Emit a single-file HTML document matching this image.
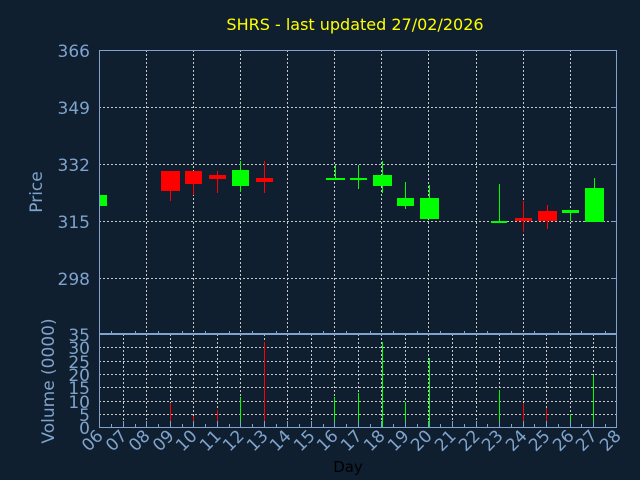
<!DOCTYPE html>
<html><head><style>
html,body{margin:0;padding:0;background:#0f1f2f;width:640px;height:480px;overflow:hidden}
svg{display:block}
text{font-family:"DejaVu Sans","Liberation Sans",sans-serif}
</style></head><body>
<svg width="640" height="480" viewBox="0 0 640 480" xmlns="http://www.w3.org/2000/svg">
<rect width="640" height="480" fill="#0f1f2f"/>
<text x="355" y="30" fill="#ffff00" font-size="16" text-anchor="middle">SHRS - last updated 27/02/2026</text>
<g stroke="#c8c8c8" stroke-dasharray="2,2" stroke-width="1">
<line x1="99" x2="617" y1="107.5" y2="107.5"/>
<line x1="99" x2="617" y1="164.5" y2="164.5"/>
<line x1="99" x2="617" y1="221.5" y2="221.5"/>
<line x1="99" x2="617" y1="278.5" y2="278.5"/>
<line x1="146.5" x2="146.5" y1="50" y2="334"/>
<line x1="193.5" x2="193.5" y1="50" y2="334"/>
<line x1="240.5" x2="240.5" y1="50" y2="334"/>
<line x1="287.5" x2="287.5" y1="50" y2="334"/>
<line x1="334.5" x2="334.5" y1="50" y2="334"/>
<line x1="381.5" x2="381.5" y1="50" y2="334"/>
<line x1="428.5" x2="428.5" y1="50" y2="334"/>
<line x1="476.5" x2="476.5" y1="50" y2="334"/>
<line x1="523.5" x2="523.5" y1="50" y2="334"/>
<line x1="570.5" x2="570.5" y1="50" y2="334"/>
<line x1="99" x2="617" y1="347.5" y2="347.5"/>
<line x1="99" x2="617" y1="361.5" y2="361.5"/>
<line x1="99" x2="617" y1="374.5" y2="374.5"/>
<line x1="99" x2="617" y1="387.5" y2="387.5"/>
<line x1="99" x2="617" y1="401.5" y2="401.5"/>
<line x1="99" x2="617" y1="414.5" y2="414.5"/>
<line x1="123.5" x2="123.5" y1="334" y2="427"/><line x1="146.5" x2="146.5" y1="334" y2="427"/>
<line x1="170.5" x2="170.5" y1="334" y2="427"/><line x1="193.5" x2="193.5" y1="334" y2="427"/>
<line x1="217.5" x2="217.5" y1="334" y2="427"/><line x1="240.5" x2="240.5" y1="334" y2="427"/>
<line x1="264.5" x2="264.5" y1="334" y2="427"/><line x1="287.5" x2="287.5" y1="334" y2="427"/>
<line x1="311.5" x2="311.5" y1="334" y2="427"/><line x1="334.5" x2="334.5" y1="334" y2="427"/>
<line x1="358.5" x2="358.5" y1="334" y2="427"/><line x1="381.5" x2="381.5" y1="334" y2="427"/>
<line x1="405.5" x2="405.5" y1="334" y2="427"/><line x1="428.5" x2="428.5" y1="334" y2="427"/>
<line x1="452.5" x2="452.5" y1="334" y2="427"/><line x1="476.5" x2="476.5" y1="334" y2="427"/>
<line x1="499.5" x2="499.5" y1="334" y2="427"/><line x1="523.5" x2="523.5" y1="334" y2="427"/>
<line x1="546.5" x2="546.5" y1="334" y2="427"/><line x1="570.5" x2="570.5" y1="334" y2="427"/>
<line x1="593.5" x2="593.5" y1="334" y2="427"/>
</g>
<g>
<rect x="99" y="195" width="8" height="11" fill="#00ff00"/>
<line x1="170.5" x2="170.5" y1="171" y2="201" stroke="#ff0000"/><rect x="161" y="171" width="19" height="20" fill="#ff0000"/>
<line x1="193.5" x2="193.5" y1="171" y2="195" stroke="#ff0000"/><rect x="185" y="171" width="17" height="13" fill="#ff0000"/>
<line x1="217.5" x2="217.5" y1="171" y2="193" stroke="#ff0000"/><rect x="209" y="175" width="17" height="4" fill="#ff0000"/>
<line x1="240.5" x2="240.5" y1="161" y2="192" stroke="#00ff00"/><rect x="232" y="170" width="17" height="16" fill="#00ff00"/>
<line x1="264.5" x2="264.5" y1="161" y2="193" stroke="#ff0000"/><rect x="256" y="178" width="17" height="4" fill="#ff0000"/>
<line x1="335.5" x2="335.5" y1="165" y2="180" stroke="#00ff00"/><rect x="326" y="178" width="19" height="2" fill="#00ff00"/>
<line x1="358.5" x2="358.5" y1="165" y2="189" stroke="#00ff00"/><rect x="350" y="178" width="17" height="2" fill="#00ff00"/>
<line x1="382.5" x2="382.5" y1="161" y2="193" stroke="#00ff00"/><rect x="373" y="175" width="19" height="11" fill="#00ff00"/>
<line x1="405.5" x2="405.5" y1="182" y2="209" stroke="#00ff00"/><rect x="397" y="198" width="17" height="8" fill="#00ff00"/>
<line x1="429.5" x2="429.5" y1="185" y2="219" stroke="#00ff00"/><rect x="420" y="198" width="19" height="21" fill="#00ff00"/>
<line x1="499.5" x2="499.5" y1="184" y2="222" stroke="#00ff00"/><rect x="491" y="221" width="16" height="2" fill="#00ff00"/>
<line x1="523.5" x2="523.5" y1="201" y2="232" stroke="#ff0000"/><rect x="515" y="218" width="17" height="3" fill="#ff0000"/>
<line x1="547.5" x2="547.5" y1="205" y2="229" stroke="#ff0000"/><rect x="538" y="211" width="19" height="10" fill="#ff0000"/>
<line x1="570.5" x2="570.5" y1="210" y2="221" stroke="#00ff00"/><rect x="562" y="210" width="17" height="3" fill="#00ff00"/>
<line x1="594.5" x2="594.5" y1="178" y2="221" stroke="#00ff00"/><rect x="585" y="188" width="19" height="34" fill="#00ff00"/>
</g>
<g stroke-width="1">
<line x1="170.5" x2="170.5" y1="403" y2="427" stroke="#ff0000"/>
<line x1="193.5" x2="193.5" y1="416" y2="427" stroke="#ff0000"/>
<line x1="217.5" x2="217.5" y1="410" y2="427" stroke="#ff0000"/>
<line x1="240.5" x2="240.5" y1="397" y2="427" stroke="#00ff00"/>
<line x1="264.5" x2="264.5" y1="342" y2="427" stroke="#ff0000"/>
<line x1="334.5" x2="334.5" y1="397" y2="427" stroke="#00ff00"/>
<line x1="358.5" x2="358.5" y1="393" y2="427" stroke="#00ff00"/>
<line x1="382.5" x2="382.5" y1="342" y2="427" stroke="#00ff00"/>
<line x1="405.5" x2="405.5" y1="402" y2="427" stroke="#00ff00"/>
<line x1="429.5" x2="429.5" y1="358" y2="427" stroke="#00ff00"/>
<line x1="499.5" x2="499.5" y1="390" y2="427" stroke="#00ff00"/>
<line x1="523.5" x2="523.5" y1="403" y2="427" stroke="#ff0000"/>
<line x1="546.5" x2="546.5" y1="408" y2="427" stroke="#ff0000"/>
<line x1="570.5" x2="570.5" y1="414" y2="427" stroke="#00ff00"/>
<line x1="593.5" x2="593.5" y1="375" y2="427" stroke="#00ff00"/>
</g>
<g stroke="#7fa3cc" fill="none" stroke-width="1">
<rect x="99.5" y="50.5" width="517" height="283"/>
<rect x="99.5" y="334.5" width="517" height="93"/>
<line x1="611" x2="617" y1="107.5" y2="107.5"/><line x1="611" x2="617" y1="164.5" y2="164.5"/>
<line x1="611" x2="617" y1="221.5" y2="221.5"/><line x1="611" x2="617" y1="278.5" y2="278.5"/>
<path d="M99.5 427v-6M123.5 427v-6M146.5 427v-6M170.5 427v-6M193.5 427v-6M217.5 427v-6M240.5 427v-6M264.5 427v-6M287.5 427v-6M311.5 427v-6M334.5 427v-6M358.5 427v-6M381.5 427v-6M405.5 427v-6M428.5 427v-6M452.5 427v-6M476.5 427v-6M499.5 427v-6M523.5 427v-6M546.5 427v-6M570.5 427v-6M593.5 427v-6"/>
<path d="M111.5 427v-3M135.5 427v-3M158.5 427v-3M182.5 427v-3M205.5 427v-3M229.5 427v-3M252.5 427v-3M276.5 427v-3M299.5 427v-3M323.5 427v-3M346.5 427v-3M370.5 427v-3M393.5 427v-3M417.5 427v-3M440.5 427v-3M464.5 427v-3M487.5 427v-3M511.5 427v-3M534.5 427v-3M558.5 427v-3M581.5 427v-3M605.5 427v-3"/>
<path d="M111.5 334v-3M135.5 334v-3M158.5 334v-3M182.5 334v-3M205.5 334v-3M229.5 334v-3M252.5 334v-3M276.5 334v-3M299.5 334v-3M323.5 334v-3M346.5 334v-3M370.5 334v-3M393.5 334v-3M417.5 334v-3M440.5 334v-3M464.5 334v-3M487.5 334v-3M511.5 334v-3M534.5 334v-3M558.5 334v-3M581.5 334v-3M605.5 334v-3"/>
</g>
<g fill="#7fa3cc" font-size="17" text-anchor="end">
<text x="90" y="57">366</text><text x="90" y="114">349</text><text x="90" y="171">332</text>
<text x="90" y="228">315</text><text x="90" y="285">298</text>
<text x="90" y="341">35</text><text x="90" y="354">30</text><text x="90" y="368">25</text>
<text x="90" y="381">20</text><text x="90" y="394">15</text><text x="90" y="408">10</text>
<text x="90" y="421">5</text><text x="90" y="434">0</text>
</g>
<text transform="translate(42,192) rotate(-90)" fill="#7fa3cc" font-size="17" text-anchor="middle">Price</text>
<text transform="translate(54,381) rotate(-90)" fill="#7fa3cc" font-size="17" text-anchor="middle">Volume (0000)</text>
<g fill="#7fa3cc" font-size="17" text-anchor="end">
<text transform="translate(104,437) rotate(-45)">06</text>
<text transform="translate(128,437) rotate(-45)">07</text>
<text transform="translate(151,437) rotate(-45)">08</text>
<text transform="translate(175,437) rotate(-45)">09</text>
<text transform="translate(198,437) rotate(-45)">10</text>
<text transform="translate(222,437) rotate(-45)">11</text>
<text transform="translate(245,437) rotate(-45)">12</text>
<text transform="translate(269,437) rotate(-45)">13</text>
<text transform="translate(292,437) rotate(-45)">14</text>
<text transform="translate(316,437) rotate(-45)">15</text>
<text transform="translate(339,437) rotate(-45)">16</text>
<text transform="translate(363,437) rotate(-45)">17</text>
<text transform="translate(386,437) rotate(-45)">18</text>
<text transform="translate(410,437) rotate(-45)">19</text>
<text transform="translate(433,437) rotate(-45)">20</text>
<text transform="translate(457,437) rotate(-45)">21</text>
<text transform="translate(481,437) rotate(-45)">22</text>
<text transform="translate(504,437) rotate(-45)">23</text>
<text transform="translate(528,437) rotate(-45)">24</text>
<text transform="translate(551,437) rotate(-45)">25</text>
<text transform="translate(575,437) rotate(-45)">26</text>
<text transform="translate(598,437) rotate(-45)">27</text>
<text transform="translate(622,437) rotate(-45)">28</text>
</g>
<text x="348" y="472" fill="#000000" font-size="15" text-anchor="middle">Day</text>
</svg>
</body></html>
